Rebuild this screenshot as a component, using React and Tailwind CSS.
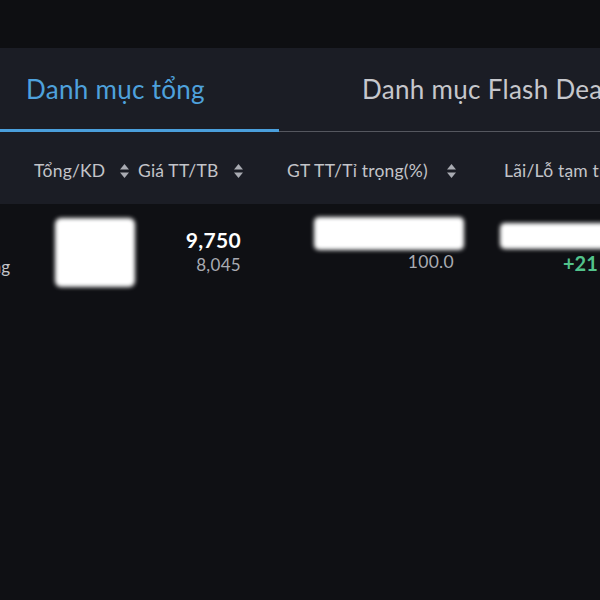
import React from "react";

function SortIcon() {
  return (
    <svg width="11" height="16" viewBox="0 0 11 16" className="shrink-0">
      <path d="M5.5 1 L10 6.5 L1 6.5 Z" fill="#a9abb2" />
      <path d="M5.5 15 L10 9.5 L1 9.5 Z" fill="#a9abb2" />
    </svg>
  );
}

export default function App() {
  return (
    <div
      className="w-[600px] h-[600px] overflow-hidden bg-[#0f1014] flex flex-col"
      style={{ fontFamily: "Lato, 'Noto Sans', sans-serif" }}
    >
      <div className="h-[48px] bg-[#0e0f12] shrink-0" />
      <div className="h-[156px] bg-[#1b1d25] shrink-0 flex flex-col">
        <div className="h-[81px] flex items-center whitespace-nowrap text-[26px] tracking-[0.3px]">
          <div className="w-[278px] shrink-0 pl-[26px] text-[#4ea1dc] pt-[2px]">Danh mục tổng</div>
          <div className="shrink-0 pl-[84px] text-[#c6c7cc] pt-[2px]">Danh mục Flash Deal</div>
        </div>
        <div className="flex items-end h-[3px]">
          <div className="w-[279px] shrink-0 h-[3px] bg-[#4a9fdc]" />
          <div className="flex-1 h-[1px] bg-[#55575f]" />
        </div>
        <div className="flex-1 flex items-center whitespace-nowrap text-[17.5px] tracking-[0.2px] text-[#c3c4c9] pt-[6px]">
          <span className="ml-[34px] w-[85px] shrink-0">Tổng/KD</span>
          <span className="w-[19px] shrink-0 flex"><SortIcon /></span>
          <span className="w-[95px] shrink-0">Giá TT/TB</span>
          <span className="w-[54px] shrink-0 flex"><SortIcon /></span>
          <span className="w-[159px] shrink-0">GT TT/Tỉ trọng(%)</span>
          <span className="w-[58px] shrink-0 flex"><SortIcon /></span>
          <span className="shrink-0">Lãi/Lỗ tạm tính</span>
        </div>
      </div>
      <div className="flex whitespace-nowrap">
        <div className="w-[10px] shrink-0 flex justify-end pt-[50px] text-[17px] text-[#c3c4c9]">
          <span>Tổng</span>
        </div>
        <div className="w-[45px] shrink-0" />
        <div className="w-[80px] shrink-0 pt-[14px]">
          <div className="w-[80px] h-[69px] bg-white rounded-[6px] blur-[2px]" />
        </div>
        <div className="w-[106px] shrink-0 flex flex-col items-end pt-[22px]">
          <span className="text-[21px] font-bold text-white leading-[28px] tracking-[0.3px]">9,750</span>
          <span className="text-[17px] text-[#a9abb2] leading-[22px] tracking-[0.3px]">8,045</span>
        </div>
        <div className="w-[73px] shrink-0" />
        <div className="w-[150px] shrink-0 flex flex-col pt-[13px]">
          <div className="w-[150px] h-[33px] bg-white rounded-[5px] blur-[2px]" />
          <span className="self-end mr-[10px] text-[17.5px] text-[#a9abb2] leading-[22px] mt-[1px] tracking-[0.3px]">100.0</span>
        </div>
        <div className="w-[36px] shrink-0" />
        <div className="shrink-0 flex flex-col pt-[19px]">
          <div className="w-[120px] h-[26px] bg-white rounded-[5px] blur-[2px]" />
          <span className="ml-[63px] text-[20px] font-bold text-[#52c28b] leading-[26px] mt-[1px]">+21</span>
        </div>
      </div>
    </div>
  );
}
